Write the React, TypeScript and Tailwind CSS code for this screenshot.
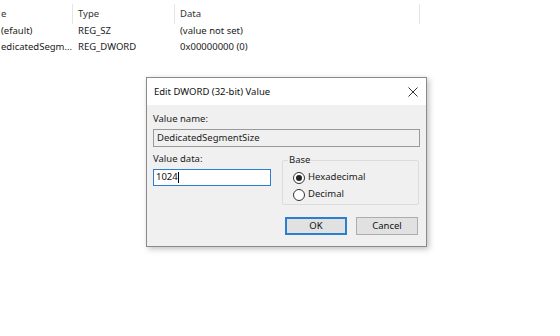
import React from 'react';

const font = { fontFamily: '"Noto Sans", "Open Sans", sans-serif' };

function ListRow({ name, type, data }: { name: string; type: string; data: string }) {
  return (
    <div className="flex h-[16px] items-center text-[9.5px] text-[#1a1a1a]">
      <div className="w-[78px] pl-[1px]">{name}</div>
      <div className="w-[102px]">{type}</div>
      <div>{data}</div>
    </div>
  );
}

function Radio({ checked, label }: { checked?: boolean; label: string }) {
  return (
    <div className="flex items-center gap-[3px] h-[17px]">
      <span className="w-[12px] h-[12px] rounded-full border border-[#333] bg-white flex items-center justify-center">
        {checked && <span className="w-[6px] h-[6px] rounded-full bg-[#222]" />}
      </span>
      <span className="text-[9.5px] text-[#1a1a1a]">{label}</span>
    </div>
  );
}

export default function App() {
  return (
    <div className="relative w-[560px] h-[336px] bg-white overflow-hidden" style={font}>
      {/* registry list behind */}
      <div className="flex flex-col">
        <div className="flex h-[23px] items-start pt-[4px] text-[9.5px] text-[#333]">
          <div className="w-[73px] pl-[1px] h-[20px] flex items-center border-r border-[#e5e5e5]">e</div>
          <div className="w-[102px] pl-[5px] h-[20px] flex items-center border-r border-[#e5e5e5]">Type</div>
          <div className="w-[245px] pl-[5px] h-[20px] flex items-center border-r border-[#e5e5e5]">Data</div>
        </div>
        <ListRow name="(efault)" type="REG_SZ" data="(value not set)" />
        <ListRow name="edicatedSegm..." type="REG_DWORD" data="0x00000000 (0)" />
      </div>

      {/* dialog */}
      <div className="absolute left-[146px] top-[77px] w-[281px] h-[170px] border border-[#8a8a8a] bg-[#f0f0f0] shadow-[2px_2px_6px_rgba(0,0,0,0.25)] flex flex-col">
        <div className="h-[27px] bg-white flex items-center justify-between pl-[7px] pr-[8px]">
          <span className="text-[9.5px] text-[#111] mt-[1px]">Edit DWORD (32-bit) Value</span>
          <svg width="10" height="10" viewBox="0 0 10 10" className="text-[#333]">
            <path d="M0.5 0.5 L9.5 9.5 M9.5 0.5 L0.5 9.5" stroke="currentColor" strokeWidth="1" />
          </svg>
        </div>
        <div className="flex flex-col px-[6px] pt-[7px]">
          <div className="text-[9.5px] text-[#222] h-[15px] flex items-center">Value name:</div>
          <div className="mt-[2px] h-[18px] border border-[#9a9a9a] bg-[#f0f0f0] flex items-center px-[3px] text-[9.5px] text-[#222]">
            DedicatedSegmentSize
          </div>
          <div className="flex mt-[6px]">
            <div className="flex flex-col w-[118px]">
              <div className="text-[9.5px] text-[#222] h-[13px] flex items-center">Value data:</div>
              <div className="mt-[3px] h-[17px] border border-[#2a7fd0] bg-white flex items-center px-[2px] text-[9.5px] text-[#111]">
                1024<span className="w-[1px] h-[11px] bg-black" />
              </div>
            </div>
            <div className="relative ml-[11px] mt-[7px] w-[137px] h-[45px] border border-[#dcdcdc] rounded-[2px]">
              <span className="absolute left-[5px] top-[-8px] bg-[#f0f0f0] px-[1px] text-[9.5px] text-[#222]">Base</span>
              <div className="flex flex-col pl-[10px] pt-[8px]">
                <Radio checked label="Hexadecimal" />
                <Radio label="Decimal" />
              </div>
            </div>
          </div>
          <div className="flex justify-end gap-[9px] mt-[12px] pr-[2px]">
            <button className="w-[62px] h-[18px] border-2 border-[#2a7fd0] bg-[#e1e1e1] text-[9.5px] text-[#111]">OK</button>
            <button className="w-[62px] h-[18px] border border-[#adadad] bg-[#e1e1e1] text-[9.5px] text-[#111]">Cancel</button>
          </div>
        </div>
      </div>
    </div>
  );
}
